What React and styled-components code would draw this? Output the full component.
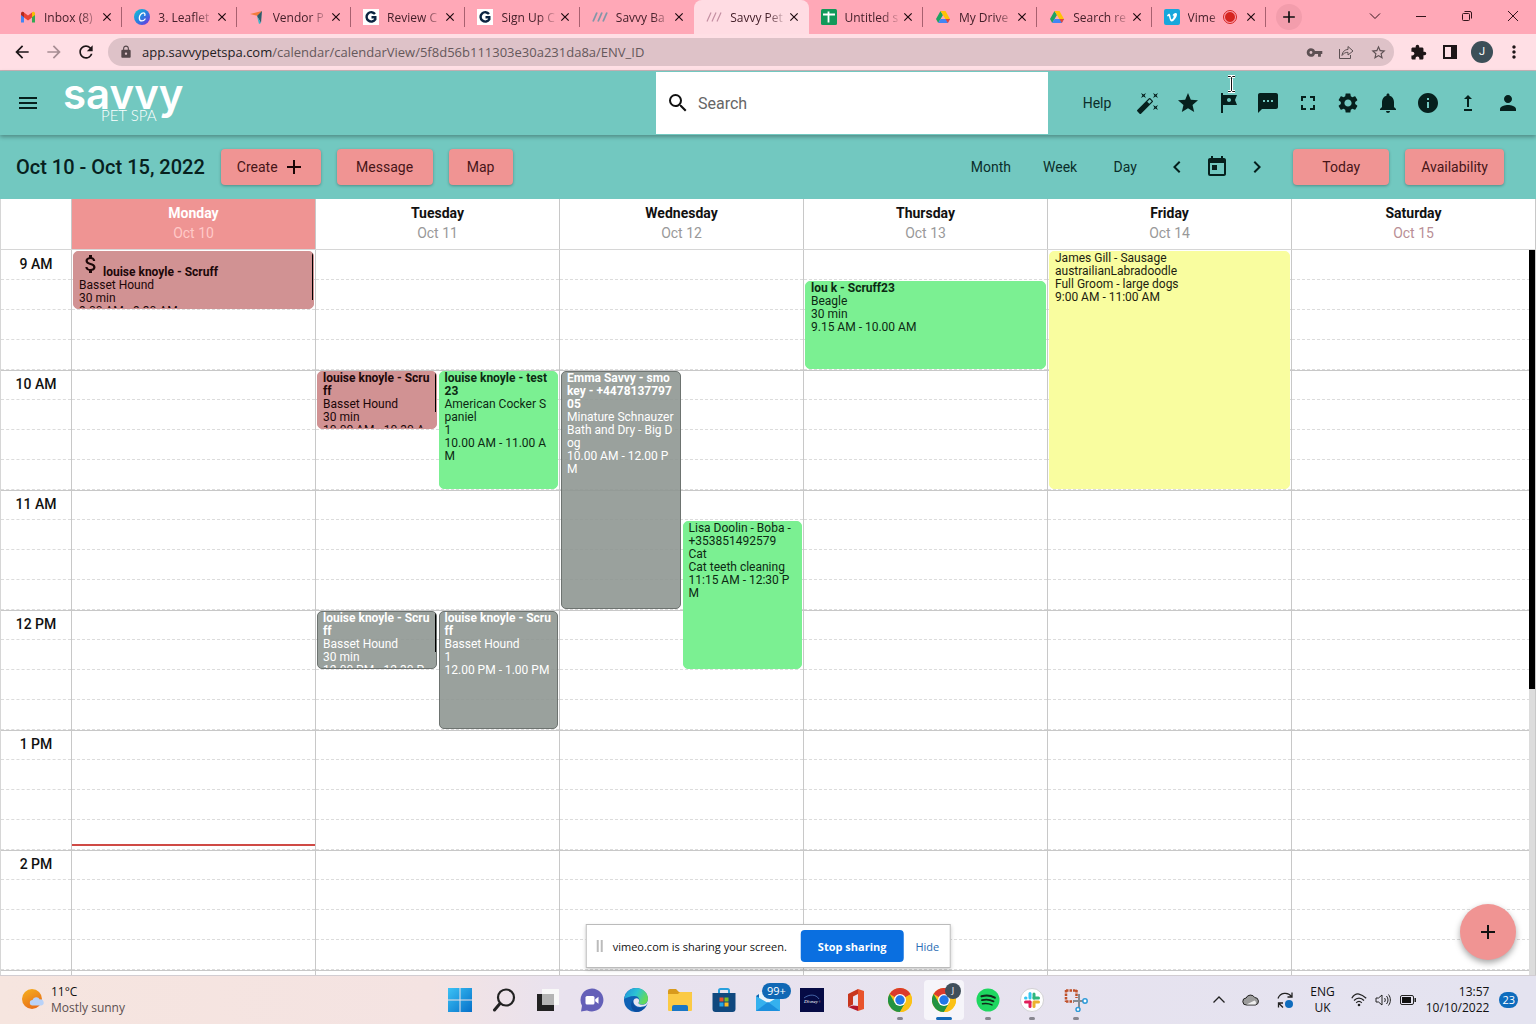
import React, { useState } from 'react';
import styled, { createGlobalStyle } from 'styled-components';
import {
  MdAdd,
  MdArrowBack,
  MdArrowForward,
  MdAttachMoney,
  MdAutoFixHigh,
  MdChevronLeft,
  MdChevronRight,
  MdClose,
  MdExtension,
  MdFullscreen,
  MdInfo,
  MdLock,
  MdMenu,
  MdMoreVert,
  MdNotifications,
  MdPerson,
  MdRefresh,
  MdSearch,
  MdSettings,
  MdSms,
  MdStar,
  MdStarBorder,
  MdToday,
  MdTour,
  MdUpgrade,
  MdVpnKey,
} from 'react-icons/md';

const tabs = [
  { icon: 'gmail', title: 'Inbox (8)' },
  { icon: 'canva', title: '3. Leaflet' },
  { icon: 'vendor', title: 'Vendor P' },
  { icon: 'g', title: 'Review C' },
  { icon: 'g', title: 'Sign Up C' },
  { icon: 'savvy', title: 'Savvy Ba' },
  { icon: 'savvyPink', title: 'Savvy Pet', active: true },
  { icon: 'sheets', title: 'Untitled s' },
  { icon: 'drive', title: 'My Drive' },
  { icon: 'drive', title: 'Search re' },
  { icon: 'vimeo', title: 'Vime', recording: true },
];

const hours = ['9 AM', '10 AM', '11 AM', '12 PM', '1 PM', '2 PM', '3 PM'];
const slots = Array.from({ length: hours.length * 4 }, (_, i) => i);

const days = [
  {
    name: 'Monday',
    date: 'Oct 10',
    today: true,
    events: [
      {
        start: 1,
        span: 2,
        tone: 'red',
        paid: true,
        scroll: 48,
        name: 'louise knoyle - Scruff',
        lines: ['Basset Hound', '30 min', '9.00 AM - 9.30 AM'],
      },
    ],
  },
  {
    name: 'Tuesday',
    date: 'Oct 11',
    events: [
      {
        start: 5,
        span: 2,
        col: '1',
        tone: 'red',
        scroll: 40,
        name: 'louise knoyle - Scruff',
        lines: ['Basset Hound', '30 min', '10.00 AM - 10.30 AM'],
      },
      {
        start: 5,
        span: 4,
        col: '2',
        tone: 'green',
        name: 'louise knoyle - test23',
        lines: ['American Cocker Spaniel', '1', '10.00 AM - 11.00 AM'],
      },
      {
        start: 13,
        span: 2,
        col: '1',
        tone: 'grey',
        scroll: 40,
        name: 'louise knoyle - Scruff',
        lines: ['Basset Hound', '30 min', '12.00 PM - 12.30 PM'],
      },
      {
        start: 13,
        span: 4,
        col: '2',
        tone: 'grey',
        name: 'louise knoyle - Scruff',
        lines: ['Basset Hound', '1', '12.00 PM - 1.00 PM'],
      },
    ],
  },
  {
    name: 'Wednesday',
    date: 'Oct 12',
    events: [
      {
        start: 5,
        span: 8,
        col: '1',
        tone: 'grey',
        name: 'Emma Savvy - smokey - +447813779705',
        lines: [
          'Minature Schnauzer',
          'Bath and Dry - Big Dog',
          '10.00 AM - 12.00 PM',
        ],
      },
      {
        start: 10,
        span: 5,
        col: '2',
        tone: 'green',
        plain: true,
        name: 'Lisa Doolin - Boba - +353851492579',
        lines: ['Cat', 'Cat teeth cleaning', '11:15 AM - 12:30 PM'],
      },
    ],
  },
  {
    name: 'Thursday',
    date: 'Oct 13',
    events: [
      {
        start: 2,
        span: 3,
        tone: 'green',
        name: 'lou k - Scruff23',
        lines: ['Beagle', '30 min', '9.15 AM - 10.00 AM'],
      },
    ],
  },
  {
    name: 'Friday',
    date: 'Oct 14',
    events: [
      {
        start: 1,
        span: 8,
        tone: 'yellow',
        plain: true,
        name: 'James Gill - Sausage',
        lines: [
          'austrailianLabradoodle',
          'Full Groom - large dogs',
          '9:00 AM - 11:00 AM',
        ],
      },
    ],
  },
  { name: 'Saturday', date: 'Oct 15', weekend: true, events: [] },
];

const tones = {
  red: { fill: '#d19293', line: '#d19293', text: '#1c0708' },
  green: { fill: '#7bf092', line: '#7bf092', text: '#0c2912' },
  grey: { fill: 'rgba(140, 148, 143, 0.88)', line: '#6d7370', text: '#fff' },
  yellow: { fill: '#f9fd9f', line: '#f9fd9f', text: '#1d1d10' },
};

const appIcons = [
  { label: 'What is new', Icon: MdAutoFixHigh },
  { label: 'Favourites', Icon: MdStar },
  { label: 'Tour', Icon: MdTour },
  { label: 'Messages', Icon: MdSms },
  { label: 'Full screen', Icon: MdFullscreen },
  { label: 'Settings', Icon: MdSettings },
  { label: 'Notifications', Icon: MdNotifications },
  { label: 'Info', Icon: MdInfo },
  { label: 'Upgrade', Icon: MdUpgrade },
  { label: 'Account', Icon: MdPerson },
];

const taskApps = [
  { label: 'Start', icon: 'windows' },
  { label: 'Search', icon: 'search' },
  { label: 'Task view', icon: 'taskview' },
  { label: 'Chat', icon: 'chat' },
  { label: 'Edge', icon: 'edge' },
  { label: 'Explorer', icon: 'folder' },
  { label: 'Store', icon: 'store' },
  { label: 'Mail', icon: 'mail', badge: '99+' },
  { label: 'Disney', icon: 'disney' },
  { label: 'Office', icon: 'office' },
  { label: 'Chrome', icon: 'chrome', open: true },
  { label: 'Chrome J', icon: 'chrome', open: true, active: true, person: 'J' },
  { label: 'Spotify', icon: 'spotify', open: true },
  { label: 'Slack', icon: 'slack', open: true },
  { label: 'Snipping tool', icon: 'snip', open: true },
];

function Favicon({ name }) {
  switch (name) {
    case 'gmail':
      return (
        <svg width="16" height="16" viewBox="0 0 16 16">
          <path d="M1 4v9.500h3V7z" fill="#4285f4" />
          <path d="M15 4v9.500h-3V7z" fill="#34a853" />
          <path d="M4 3.500v5l4 3 4-3v-5l-4 3z" fill="#ea4335" />
          <path d="M1 4.500C1 2.500 3 2.200 4 3.200v5L1 6z" fill="#b52a20" />
          <path d="M15 4.500c0-2-2-2.300-3-1.300v5L15 6z" fill="#fbbc04" />
        </svg>
      );
    case 'canva':
      return (
        <svg width="16" height="16" viewBox="0 0 16 16">
          <defs>
            <linearGradient id="canva" x1="0" y1="0" x2="1" y2="1">
              <stop offset="0" stopColor="#10c8d2" />
              <stop offset="0.5" stopColor="#2a7fe0" />
              <stop offset="1" stopColor="#7b2be0" />
            </linearGradient>
          </defs>
          <circle cx="8" cy="8" r="8" fill="url(#canva)" />
          <path
            d="M10.800 6.400c.6-1.500-.3-2.600-1.500-2.500-2.200.1-4 2.700-4 5 0 1.800 1 3 2.600 3 1.400 0 2.500-.8 3.200-1.900"
            fill="none"
            stroke="#fff"
            strokeWidth="1.300"
            strokeLinecap="round"
          />
        </svg>
      );
    case 'vendor':
      return (
        <svg width="16" height="16" viewBox="0 0 16 16">
          <path d="M1 5l12-3-4 5z" fill="#f47b3c" />
          <path d="M13 2l-1 12-4-7z" fill="#2b5d6b" />
          <path d="M8 7l4 7-2 1z" fill="#3bb5c9" />
        </svg>
      );
    case 'g':
      return (
        <svg width="16" height="16" viewBox="0 0 16 16">
          <rect width="16" height="16" fill="#fff" />
          <path
            d="M12 5A4.700 4.700 0 1 0 12.300 10.300V8.300H8.500"
            fill="none"
            stroke="#0b2340"
            strokeWidth="2.400"
          />
        </svg>
      );
    case 'savvy':
    case 'savvyPink':
      return (
        <svg width="16" height="16" viewBox="0 0 16 16">
          <g
            stroke={name === 'savvy' ? '#8296a8' : '#c48fa2'}
            strokeWidth={name === 'savvy' ? 1.8 : 1.2}
          >
            <path d="M1 12.500L5 3.500" />
            <path d="M6 12.500l4-9" />
            <path d="M11 12.500l4-9" />
          </g>
        </svg>
      );
    case 'sheets':
      return (
        <svg width="16" height="16" viewBox="0 0 16 16">
          <rect width="16" height="16" rx="1.500" fill="#12995a" />
          <path d="M2 5.500h12M7.500 2.500v11" stroke="#fff" strokeWidth="1.800" />
        </svg>
      );
    case 'drive':
      return (
        <svg width="16" height="16" viewBox="0 0 16 16">
          <path d="M5.500 2L1 10l2.200 4L8 6z" fill="#1ea362" />
          <path d="M5.500 2h5L15 10h-4.600z" fill="#ffc107" />
          <path d="M3.200 14L5.500 10H15l-2.200 4z" fill="#4285f4" />
          <path d="M10.500 10H15l-2.200 4z" fill="#ea4335" />
        </svg>
      );
    default:
      return (
        <svg width="16" height="16" viewBox="0 0 16 16">
          <rect width="16" height="16" rx="2" fill="#17a7dc" />
          <path
            d="M3 6.200c1.500-1.300 2.600-2.400 3.200-.2.500 2 .8 4.500 1.500 4.500.8 0 2-2.200 2-3.200 0-.8-.6-.8-1.200-.6C9.300 3.600 13.300 3 13 5.800c-.2 2-2.900 6.700-5.300 6.700C5.500 12.500 5.500 7 4.300 7l-.7.400z"
            fill="#fff"
          />
        </svg>
      );
  }
}

function TaskIcon({ name }) {
  switch (name) {
    case 'windows':
      return (
        <svg width="24" height="24" viewBox="0 0 24 24">
          <defs>
            <linearGradient id="win" x1="0" y1="0" x2="1" y2="1">
              <stop offset="0" stopColor="#3cc2f5" />
              <stop offset="1" stopColor="#0570c9" />
            </linearGradient>
          </defs>
          <path
            d="M0 0h11.500v11.500H0zM12.500 0H24v11.500H12.500zM0 12.500h11.500V24H0zM12.500 12.500H24V24H12.500z"
            fill="url(#win)"
          />
        </svg>
      );
    case 'search':
      return (
        <svg width="24" height="24" viewBox="0 0 24 24">
          <circle cx="14" cy="9.500" r="8" fill="none" stroke="#222" strokeWidth="2.200" />
          <path d="M8 15.500L2.500 22" stroke="#222" strokeWidth="3" strokeLinecap="round" />
        </svg>
      );
    case 'taskview':
      return (
        <svg width="24" height="24" viewBox="0 0 24 24">
          <rect x="6" y="1" width="17" height="16" fill="#f8f8f8" />
          <rect x="1" y="6" width="17" height="17" fill="#222" />
          <rect x="6" y="6" width="12" height="11" fill="#b4b4b4" />
        </svg>
      );
    case 'chat':
      return (
        <svg width="24" height="24" viewBox="0 0 24 24">
          <path
            d="M12 .5A11.500 11.500 0 1 1 7 22.400L1 23.500l1-5.800A11.500 11.500 0 0 1 12 .5z"
            fill="#6460b8"
          />
          <rect x="5.500" y="8" width="9" height="8.500" rx="1.500" fill="#fff" />
          <path d="M15.200 11.300l3.300-2.500v7l-3.300-2.500z" fill="#fff" />
        </svg>
      );
    case 'edge':
      return (
        <svg width="24" height="24" viewBox="0 0 24 24">
          <defs>
            <linearGradient id="edgeTop" x1="0" y1="0" x2="1" y2="0.4">
              <stop offset="0" stopColor="#1f8edb" />
              <stop offset="0.55" stopColor="#2cc4d4" />
              <stop offset="1" stopColor="#62d95a" />
            </linearGradient>
          </defs>
          <circle cx="12" cy="12" r="12" fill="#0f62b5" />
          <path
            d="M.2 11C1 4.500 6 0 12 0c7 0 12 5 12 10.500 0 4-3 6-6 6-2.600 0-4-1-3.200-2.300 1.800-2.500-.4-6.200-4.300-6.200C5.500 8 2 10 .2 11z"
            fill="url(#edgeTop)"
          />
          <path
            d="M9 12c-1 5 3.500 8.500 8 7.700 2-.3 3.500-.9 4.800-1.800C19.500 22 16 24 12 24 7 22.500 5.500 15.500 9 12z"
            fill="#0b4da0"
          />
          <path
            d="M9.500 12.500c-.7 5 5 8.500 12.500 5l2-2.500V11c0 4-3 5.800-6 5.800-2.600 0-4.200-1-3.300-2.500.7-1.100.5-2.400-.2-3.300-1.700-1.300-4.200-.5-5 1.500z"
            fill="#e6e4f2"
          />
        </svg>
      );
    case 'folder':
      return (
        <svg width="26" height="24" viewBox="0 0 26 24">
          <path d="M1 3a2 2 0 0 1 2-2h6l3 3h12a1 1 0 0 1 1 1v3H1z" fill="#d89a1c" />
          <path d="M1 6h10l2-2h11a1 1 0 0 1 1 1v17a1 1 0 0 1-1 1H2a1 1 0 0 1-1-1z" fill="#fbca45" />
          <path d="M5 23v-4a2 2 0 0 1 2-2h12a2 2 0 0 1 2 2v4z" fill="#1876c5" />
        </svg>
      );
    case 'store':
      return (
        <svg width="24" height="24" viewBox="0 0 24 24">
          <path d="M7 6V2.500A1.500 1.500 0 0 1 8.500 1h7A1.500 1.500 0 0 1 17 2.500V6" fill="none" stroke="#28a0dd" strokeWidth="2" />
          <path d="M.5 5h23v16a3 3 0 0 1-3 3h-17a3 3 0 0 1-3-3z" fill="#10487e" />
          <path d="M7.500 9.500h4v4h-4z" fill="#e8502c" />
          <path d="M12.500 9.500h4v4h-4z" fill="#7cbb22" />
          <path d="M7.500 14.500h4v4h-4z" fill="#25a5e8" />
          <path d="M12.500 14.500h4v4h-4z" fill="#fcba1d" />
        </svg>
      );
    case 'mail':
      return (
        <svg width="26" height="24" viewBox="0 0 26 24">
          <path d="M1 8L13 0l12 8v6H1z" fill="#1363ad" />
          <path d="M4 4h18v10H4z" fill="#e9f4fb" />
          <path d="M1 8l12 7 12-7v15H1z" fill="#35b1ee" />
          <path d="M1 23l12-9 12 9z" fill="#1b8fdd" />
        </svg>
      );
    case 'disney':
      return (
        <svg width="24" height="24" viewBox="0 0 24 24">
          <rect width="24" height="24" fill="#060b45" />
          <path d="M4 10c5-4 12-4 15 1" fill="none" stroke="#5d8ad0" strokeWidth="0.700" />
          <text x="4" y="15" fill="#fff" fontSize="5" fontFamily="Liberation Serif, serif" fontStyle="italic">
            Disney+
          </text>
        </svg>
      );
    case 'office':
      return (
        <svg width="24" height="24" viewBox="0 0 24 24">
          <path d="M4 6l10-5v5l-5 2.500v8L4 19z" fill="#c8361d" />
          <path d="M14 1l6 2v18l-6 2z" fill="#e8532b" />
          <path d="M4 19l5-1.500 5 .5v5z" fill="#b3152a" />
        </svg>
      );
    case 'chrome':
      return (
        <svg width="24" height="24" viewBox="0 0 24 24">
          <circle cx="12" cy="12" r="12" fill="#fbc116" />
          <path d="M12 12L1.600 6A12 12 0 0 1 22.400 6z" fill="#db3b2c" />
          <path d="M1.600 6A12 12 0 0 0 12 24l5.200-9L12 12 7 15z" fill="#229342" />
          <path d="M12 6h10.400L12 12z" fill="#db3b2c" />
          <path d="M12 24l5.200-9L22.400 6A12 12 0 0 1 12 24z" fill="#fbc116" />
          <circle cx="12" cy="12" r="6" fill="#fff" />
          <circle cx="12" cy="12" r="4.700" fill="#2377e8" />
        </svg>
      );
    case 'spotify':
      return (
        <svg width="24" height="24" viewBox="0 0 24 24">
          <circle cx="12" cy="12" r="11.500" fill="#1ed760" />
          <g fill="none" stroke="#10291a" strokeLinecap="round">
            <path d="M5.500 8.300c4.500-1.300 9.500-.8 13.300 1.300" strokeWidth="2.200" />
            <path d="M6 12.200c4-1.100 8-.6 11.500 1.200" strokeWidth="1.800" />
            <path d="M6.500 15.800c3.500-.8 6.500-.4 9.500 1.100" strokeWidth="1.500" />
          </g>
        </svg>
      );
    case 'slack':
      return (
        <svg width="24" height="24" viewBox="0 0 24 24">
          <circle cx="12" cy="12" r="11.500" fill="#fff" stroke="#bbb" strokeWidth="0.600" />
          <g strokeWidth="3" strokeLinecap="round">
            <path d="M10 5.500v4.500" stroke="#36c5f0" />
            <path d="M5.500 10H6" stroke="#36c5f0" />
            <path d="M14 6v4" stroke="#2eb67d" />
            <path d="M14 10h4.500" stroke="#2eb67d" />
            <path d="M5.500 14H10" stroke="#e01e5a" />
            <path d="M10 14v4.500" stroke="#e01e5a" />
            <path d="M14 14v4.500" stroke="#ecb22e" />
            <path d="M14.500 14h4" stroke="#ecb22e" />
          </g>
        </svg>
      );
    default:
      return (
        <svg width="24" height="24" viewBox="0 0 24 24">
          <path d="M2 2.500h11M2 2v12M2 13.500h8M12.500 2v8" stroke="#c0502a" strokeWidth="2.500" strokeDasharray="2.500 1" fill="none" />
          <path d="M15 6v15M9 13h11" stroke="#858b92" strokeWidth="2" />
          <circle cx="21" cy="13" r="2.200" fill="#fff" stroke="#2f9ad8" strokeWidth="1.500" />
          <circle cx="14" cy="21.500" r="2" fill="#fff" stroke="#2f9ad8" strokeWidth="1.500" />
        </svg>
      );
  }
}

function BrowserChrome() {
  return (
    <>
      <TabStrip>
        <TabList>
          {tabs.map((tab, index) => (
            <Tab
              key={index}
              $active={tab.active}
              $last={tabs[index + 1]?.active}
            >
              <Favicon name={tab.icon} />
              <TabTitle>{tab.title}</TabTitle>
              {tab.recording && <Recording />}
              <TabClose aria-label="Close tab">
                <MdClose />
              </TabClose>
            </Tab>
          ))}
        </TabList>
        <NewTab aria-label="New tab">
          <MdAdd />
        </NewTab>
        <WindowButtons>
          <WindowButton aria-label="Search tabs">
            <svg width="12" height="12" viewBox="0 0 12 12">
              <path d="M1 3.500l5 5 5-5" />
            </svg>
          </WindowButton>
          <WindowButton aria-label="Minimise">
            <svg width="12" height="12" viewBox="0 0 12 12">
              <path d="M1 6.500h10" />
            </svg>
          </WindowButton>
          <WindowButton aria-label="Restore">
            <svg width="12" height="12" viewBox="0 0 12 12">
              <rect x="1.500" y="3.500" width="7" height="7" rx="1" />
              <path d="M3.500 1.500h5.500a1.500 1.500 0 0 1 1.500 1.500v5.500" />
            </svg>
          </WindowButton>
          <WindowButton aria-label="Close">
            <svg width="12" height="12" viewBox="0 0 12 12">
              <path d="M1 1l10 10M11 1L1 11" />
            </svg>
          </WindowButton>
        </WindowButtons>
      </TabStrip>
      <Toolbar>
        <ToolButton aria-label="Back">
          <MdArrowBack />
        </ToolButton>
        <ToolButton aria-label="Forward" $faded>
          <MdArrowForward />
        </ToolButton>
        <ToolButton aria-label="Reload">
          <MdRefresh />
        </ToolButton>
        <AddressBar>
          <MdLock />
          <Url href="#address">
            app.savvypetspa.com
            <span>/calendar/calendarView/5f8d56b111303e30a231da8a/ENV_ID</span>
          </Url>
          <ToolButton aria-label="Passwords" $small>
            <MdVpnKey />
          </ToolButton>
          <ToolButton aria-label="Share" $small>
            <svg width="16" height="16" viewBox="0 0 16 16" fill="none" stroke="currentColor">
              <path d="M1.500 5v9.500h11V11" />
              <path d="M4 11.500c.5-4 3-6 6-6V2.500l5 4.500-5 4V8.300c-2.500 0-4.500 1-6 3.200z" />
            </svg>
          </ToolButton>
          <ToolButton aria-label="Bookmark" $small>
            <MdStarBorder />
          </ToolButton>
        </AddressBar>
        <ToolButton aria-label="Extensions" $small>
          <MdExtension />
        </ToolButton>
        <ToolButton aria-label="Side panel">
          <svg width="16" height="16" viewBox="0 0 16 16">
            <path d="M1 1h14v14H1zM3 3v10h6V3z" fillRule="evenodd" fill="currentColor" />
          </svg>
        </ToolButton>
        <ToolButton aria-label="Profile">
          <Avatar>J</Avatar>
        </ToolButton>
        <ToolButton aria-label="Menu">
          <MdMoreVert />
        </ToolButton>
      </Toolbar>
    </>
  );
}

function Event({ data }) {
  return (
    <EventBox
      $tone={tones[data.tone]}
      $start={data.start}
      $span={data.span}
      $col={data.col}
    >
      <EventText>
        <EventName $plain={data.plain} $paid={data.paid}>
          {data.paid && <MdAttachMoney />}
          {data.name}
        </EventName>
        {data.lines.map(line => (
          <div key={line}>{line}</div>
        ))}
      </EventText>
      {data.scroll && <EventThumb $size={data.scroll} />}
    </EventBox>
  );
}

function App() {
  const [search, setSearch] = useState('');

  return (
    <Screen>
      <GlobalStyle />
      <BrowserChrome />
      <AppBar>
        <IconButton aria-label="Menu">
          <MdMenu />
        </IconButton>
        <Logo href="#home">
          savvy
          <small>PET SPA</small>
        </Logo>
        <SearchBox>
          <MdSearch />
          <input
            type="text"
            aria-label="Search"
            placeholder="Search"
            value={search}
            onChange={e => setSearch(e.target.value)}
          />
        </SearchBox>
        <TextButton>Help</TextButton>
        {appIcons.map(({ label, Icon }) => (
          <IconButton key={label} aria-label={label}>
            <Icon />
            {label === 'Tour' && (
              <Cursor width="9" height="18" viewBox="0 0 9 18">
                <path d="M1 1.500h2.500l1 1 1-1H8M4.500 2.500v13M1 16.500h2.500l1-1 1 1H8" stroke="#fff" strokeWidth="3" />
                <path d="M1 1.500h2.500l1 1 1-1H8M4.500 2.500v13M1 16.500h2.500l1-1 1 1H8" stroke="#111" />
              </Cursor>
            )}
          </IconButton>
        ))}
      </AppBar>
      <CalendarBar>
        <Range>Oct 10 - Oct 15, 2022</Range>
        <ActionButton>
          Create <MdAdd />
        </ActionButton>
        <ActionButton $wide>Message</ActionButton>
        <ActionButton>Map</ActionButton>
        <ViewButtons>
          <TextButton>Month</TextButton>
          <TextButton>Week</TextButton>
          <TextButton>Day</TextButton>
          <IconButton aria-label="Previous">
            <MdChevronLeft />
          </IconButton>
          <IconButton aria-label="Pick a date">
            <MdToday />
          </IconButton>
          <IconButton aria-label="Next">
            <MdChevronRight />
          </IconButton>
        </ViewButtons>
        <ActionButton $wide>Today</ActionButton>
        <ActionButton>Availability</ActionButton>
      </CalendarBar>
      <WeekHead>
        <TimeHead />
        {days.map(day => (
          <DayHead key={day.name} $today={day.today} $weekend={day.weekend}>
            <strong>{day.name}</strong>
            <span>{day.date}</span>
          </DayHead>
        ))}
      </WeekHead>
      <Main>
        <WeekBody>
          <TimeColumn>
            {slots.map(slot => (
              <Slot key={slot} $index={slot}>
                {slot % 4 === 0 && hours[slot / 4]}
              </Slot>
            ))}
          </TimeColumn>
          {days.map(day => (
            <DayColumn key={day.name}>
              {slots.map(slot => (
                <Slot key={slot} $index={slot} />
              ))}
              {day.events.map((event, index) => (
                <Event key={index} data={event} />
              ))}
              {day.today && <NowLine />}
            </DayColumn>
          ))}
        </WeekBody>
        <ScrollTrack>
          <ScrollThumb />
        </ScrollTrack>
        <Fab aria-label="Add">
          <MdAdd />
        </Fab>
        <ShareBar>
          <Grip />
          <span>vimeo.com is sharing your screen.</span>
          <StopButton>Stop sharing</StopButton>
          <a href="#hide">Hide</a>
        </ShareBar>
      </Main>
      <Taskbar>
        <Weather>
          <svg width="24" height="24" viewBox="0 0 24 24">
            <defs>
              <linearGradient id="sun" x1="0" y1="0" x2="0.500" y2="1">
                <stop offset="0" stopColor="#f6b21d" />
                <stop offset="1" stopColor="#e8701a" />
              </linearGradient>
            </defs>
            <circle cx="11" cy="11" r="10" fill="url(#sun)" />
            <path
              d="M11.500 17.500a2.700 2.700 0 0 1 0-5.400 4 4 0 0 1 7.300-.7 3 3 0 0 1 1.500 6.100z"
              fill="#b9d2f8"
            />
          </svg>
          <div>
            11°C
            <span>Mostly sunny</span>
          </div>
        </Weather>
        <TaskApps>
          {taskApps.map(app => (
            <TaskButton key={app.label} aria-label={app.label} $active={app.active} $open={app.open}>
              <TaskIcon name={app.icon} />
              {app.badge && <MailBadge>{app.badge}</MailBadge>}
              {app.person && <PersonBadge>{app.person}</PersonBadge>}
            </TaskButton>
          ))}
        </TaskApps>
        <Tray>
          <svg width="14" height="14" viewBox="0 0 14 14" fill="none" stroke="#222" strokeWidth="1.300">
            <path d="M1.500 9.500L7 4l5.500 5.500" />
          </svg>
          <svg width="18" height="18" viewBox="0 0 18 18">
            <path
              d="M4.500 14a3.500 3.500 0 0 1-.4-7 4.800 4.800 0 0 1 8.600-.5A3.800 3.800 0 0 1 13.500 14z"
              fill="#9b9b9b"
              stroke="#222"
            />
            <path d="M4.500 13.500l8-4a3 3 0 0 1 1 4z" fill="#eee" />
          </svg>
          <svg width="18" height="18" viewBox="0 0 18 18" fill="none" stroke="#222" strokeWidth="1.300">
            <path d="M2 7.500C4 1.500 12 .5 15.500 5.500M16 1.500v4.500h-4.500" />
            <path d="M2.500 16.500V12H7M3 12.500l4 4" />
            <circle cx="13" cy="13" r="4" fill="#0f6cbd" stroke="none" />
          </svg>
          <Language>
            ENG
            <br />
            UK
          </Language>
          <TrayGroup>
            <svg width="16" height="16" viewBox="0 0 16 16" fill="none" stroke="#222" strokeWidth="1.200">
              <path d="M.8 6.300C5-1 11 2.300 15.200 6.300M3 8.500c3-3.300 7-3.300 10 0M5.200 10.800c1.700-1.800 3.900-1.800 5.600 0" />
              <circle cx="8" cy="13" r="1.300" fill="#222" stroke="none" />
            </svg>
            <svg width="16" height="16" viewBox="0 0 16 16" fill="none" stroke="#222">
              <path d="M1 6v4h2.500L7 13V3L3.500 6zM9.500 6c1 1.200 1 2.800 0 4M11.500 4c2 2.300 2 5.700 0 8M13.500 2.500c2.500 3.300 2.500 7.700 0 11" />
            </svg>
            <svg width="18" height="16" viewBox="0 0 18 16">
              <rect x="1.500" y="3.500" width="13" height="9" rx="1.500" fill="none" stroke="#222" />
              <rect x="3" y="5" width="9" height="6" fill="#111" />
              <path d="M15.500 6h1.500v4h-1.500z" fill="#222" />
            </svg>
          </TrayGroup>
          <Clock>
            13:57
            <br />
            10/10/2022
          </Clock>
          <Count>23</Count>
        </Tray>
      </Taskbar>
    </Screen>
  );
}

const GlobalStyle = createGlobalStyle`
  * {
    box-sizing: border-box;
  }
  body {
    margin: 0;
    font-family: Roboto, sans-serif;
    font-size: 14px;
    color: #111;
  }
  button {
    margin: 0;
    padding: 0;
    border: none;
    background: none;
    color: inherit;
    font: inherit;
    cursor: pointer;
  }
  a {
    color: inherit;
    text-decoration: none;
  }
  svg {
    flex: none;
  }
`;

const Screen = styled.div`
  display: flex;
  flex-direction: column;
  height: 100vh;
  overflow: hidden;
  background: #fff;
`;

//------------------- browser -------------------//

const TabStrip = styled.div`
  display: flex;
  align-items: center;
  height: 34px;
  padding-left: 8px;
  background: #ffa8b7;
  font-family: 'Open Sans', sans-serif;
  font-size: 12px;
`;

const TabList = styled.div`
  display: flex;
  flex: 0 1 1258px;
  min-width: 0;
`;

const Tab = styled.div`
  display: flex;
  align-items: center;
  flex: 1;
  min-width: 0;
  height: 34px;
  padding: 0 8px 0 12px;
  border-radius: 8px 8px 0 0;
  color: #45202a;
  background: ${props => (props.$active ? '#ffdce3' : 'none')};
  &::after {
    content: '';
    order: 9;
    width: 1px;
    height: 20px;
    margin-right: -8px;
    margin-left: 7px;
    background: ${props =>
      props.$active || props.$last ? 'transparent' : '#a8606f'};
  }
`;

const TabTitle = styled.span`
  flex: 1;
  min-width: 0;
  margin-left: 8px;
  white-space: nowrap;
  mask-image: linear-gradient(to right, #000 65%, transparent);
`;

const Recording = styled.span`
  width: 12px;
  height: 12px;
  margin: 0 8px 0 2px;
  border: 1px solid #ffa8b7;
  border-radius: 50%;
  background: #d5241f;
  outline: 1px solid #d5241f;
`;

const TabClose = styled.button`
  display: flex;
  color: #1c0a0f;
  svg {
    width: 14px;
    height: 14px;
    stroke: currentColor;
  }
`;

const NewTab = styled.button`
  display: flex;
  justify-content: center;
  align-items: center;
  width: 26px;
  height: 26px;
  margin-left: 10px;
  border-radius: 50%;
  background: #f39dac;
  svg {
    width: 20px;
    height: 20px;
  }
`;

const WindowButtons = styled.div`
  display: flex;
  margin-left: auto;
`;

const WindowButton = styled.button`
  width: 46px;
  height: 30px;
  svg {
    fill: none;
    stroke: #33141b;
  }
`;

const Toolbar = styled.div`
  display: flex;
  align-items: center;
  height: 37px;
  padding: 0 6px;
  border-bottom: 1px solid #c9b4b8;
  background: #ffdfe5;
`;

const ToolButton = styled.button`
  display: flex;
  justify-content: center;
  align-items: center;
  width: 32px;
  height: 28px;
  color: ${props => (props.$faded ? '#a78d93' : '#1d1517')};
  svg {
    font-size: ${props => (props.$small ? '17px' : '20px')};
  }
`;

const AddressBar = styled.div`
  display: flex;
  flex: 1;
  align-items: center;
  height: 28px;
  margin: 0 8px 0 6px;
  padding-left: 11px;
  border-radius: 14px;
  background: #dec2c8;
  color: #55474a;
  font-family: 'Open Sans', sans-serif;
  font-size: 13px;
  > svg {
    width: 14px;
    height: 14px;
  }
  ${ToolButton} {
    color: #5d5053;
  }
`;

const Url = styled.a`
  flex: 1;
  margin-left: 9px;
  color: #241d1f;
  white-space: nowrap;
  span {
    color: #65585b;
  }
`;

const Avatar = styled.span`
  width: 22px;
  height: 22px;
  border-radius: 50%;
  background: #3c4f58;
  color: #fff;
  font-size: 11px;
  line-height: 22px;
`;

//------------------- app bars -------------------//

const AppBar = styled.header`
  position: relative;
  display: flex;
  align-items: center;
  height: 64px;
  padding: 0 8px;
  background: #72c8c0;
  box-shadow: 0 2px 4px rgba(0, 0, 0, 0.3);
`;

const IconButton = styled.button`
  position: relative;
  display: flex;
  justify-content: center;
  align-items: center;
  width: 40px;
  height: 40px;
  color: #06201d;
  svg {
    font-size: 24px;
  }
`;

const Cursor = styled.svg`
  position: absolute;
  top: -8px;
  left: 19px;
  fill: none;
`;

const Logo = styled.a`
  margin-left: 15px;
  color: #fff;
  font-family: Inter, sans-serif;
  font-size: 42px;
  font-weight: 600;
  line-height: 24px;
  small {
    display: block;
    margin-left: 38px;
    font-family: Lato, sans-serif;
    font-size: 15px;
    font-weight: 300;
    line-height: 18px;
  }
`;

const SearchBox = styled.label`
  display: flex;
  align-items: center;
  flex: 0 1 392px;
  height: 62px;
  margin-right: 18px;
  margin-left: auto;
  padding: 0 10px;
  background: #fff;
  svg {
    width: 24px;
    height: 24px;
  }
  input {
    flex: 1;
    min-width: 0;
    margin-left: 8px;
    padding: 0;
    border: none;
    outline: none;
    font: 16px Roboto, sans-serif;
  }
  input::placeholder {
    color: #666;
  }
`;

const TextButton = styled.button`
  min-width: 62px;
  height: 36px;
  padding: 0 16px;
  color: #0b2e2a;
`;

const CalendarBar = styled.div`
  display: flex;
  align-items: center;
  gap: 16px;
  height: 64px;
  padding: 0 32px 0 16px;
  background: #72c8c0;
`;

const Range = styled.h1`
  margin: 0;
  color: #07211e;
  font-size: 20px;
  font-weight: 500;
  white-space: nowrap;
`;

const ActionButton = styled.button`
  display: flex;
  justify-content: center;
  align-items: center;
  min-width: ${props => (props.$wide ? '96px' : '64px')};
  height: 36px;
  padding: 0 16px;
  border-radius: 4px;
  background: #f09493;
  box-shadow: 0 1px 3px rgba(0, 0, 0, 0.3);
  color: #471518;
  svg {
    width: 24px;
    height: 24px;
    margin-left: 4px;
    margin-right: -1px;
    color: #1a0506;
  }
`;

const ViewButtons = styled.div`
  display: flex;
  align-items: center;
  margin-left: auto;
  ${TextButton} {
    min-width: 64px;
  }
`;

//------------------- calendar -------------------//

const WeekHead = styled.div`
  display: grid;
  grid-template-columns: 72px repeat(6, 1fr);
  height: 51px;
  border-bottom: 1px solid #d6d6d6;
`;

const TimeHead = styled.div`
  border-right: 1px solid #c8c8c8;
  border-left: 1px solid #d6d6d6;
`;

const DayHead = styled.div`
  display: flex;
  flex-direction: column;
  align-items: center;
  padding-top: 4px;
  border-right: 1px solid #c8c8c8;
  background: ${props => (props.$today ? '#ef9493' : '#fff')};
  line-height: 20px;
  strong {
    color: ${props => (props.$today ? '#fff' : '#111')};
  }
  span {
    color: ${props =>
      props.$today ? '#ffc9c8' : props.$weekend ? '#b98f96' : '#999'};
  }
`;

const Main = styled.main`
  position: relative;
  flex: 1;
  min-height: 0;
  overflow: hidden;
`;

const WeekBody = styled.div`
  display: grid;
  grid-template-columns: 72px repeat(6, 1fr);
`;

const DayColumn = styled.div`
  display: grid;
  grid-template-columns: 1fr 1fr;
  grid-template-rows: repeat(28, 30px);
  min-width: 0;
  border-right: 1px solid #c8c8c8;
`;

const TimeColumn = styled(DayColumn)`
  border-left: 1px solid #d6d6d6;
  font-weight: 500;
  text-align: center;
`;

const Slot = styled.div`
  grid-row: ${props => props.$index + 1};
  grid-column: 1 / -1;
  border-top: ${props =>
    props.$index % 4 === 0 && props.$index > 0 ? '1px solid #c8c8c8' : 'none'};
  border-bottom: 1px dashed #dcdcdc;
  line-height: ${props => (props.$index > 0 ? '26px' : '28px')};
`;

const EventBox = styled.article`
  z-index: 1;
  display: flex;
  grid-row: ${props => props.$start} / span ${props => props.$span};
  grid-column: ${props => props.$col || '1 / -1'};
  min-width: 0;
  margin: 1px;
  border: 1px solid ${props => props.$tone.line};
  border-radius: 5px;
  background: ${props => props.$tone.fill};
  color: ${props => props.$tone.text};
  font-size: 12px;
  line-height: 13px;
  overflow: hidden;
`;

const EventText = styled.div`
  flex: 1;
  min-width: 0;
  padding: 0 5px;
  word-break: break-all;
`;

const EventName = styled.div`
  display: ${props => (props.$paid ? 'flex' : 'block')};
  align-items: flex-end;
  font-weight: ${props => (props.$plain ? 400 : 700)};
  svg {
    width: 24px;
    height: 24px;
    margin-bottom: 3px;
  }
`;

// overlaps the text padding, so it takes no width from the lines
const EventThumb = styled.div`
  width: 1px;
  height: ${props => props.$size}px;
  margin-left: -1px;
  background: #000;
`;

const NowLine = styled.div`
  z-index: 1;
  grid-row: 20;
  grid-column: 1 / -1;
  align-self: end;
  height: 2px;
  margin-bottom: 4px;
  background: #cf4a45;
`;

const ScrollTrack = styled.div`
  position: absolute;
  top: 0;
  right: 1px;
  bottom: 0;
  width: 6px;
  background: #dcdcdc;
`;

const ScrollThumb = styled.div`
  height: 60.5%;
  background: #000;
`;

const Fab = styled.button`
  position: absolute;
  right: 20px;
  bottom: 15px;
  display: flex;
  justify-content: center;
  align-items: center;
  width: 56px;
  height: 56px;
  border-radius: 50%;
  background: #f09493;
  box-shadow: 0 3px 6px rgba(0, 0, 0, 0.35);
  svg {
    width: 24px;
    height: 24px;
  }
`;

const ShareBar = styled.div`
  position: absolute;
  bottom: 7px;
  left: 50%;
  display: flex;
  align-items: center;
  height: 44px;
  padding: 0 10px;
  border: 1px solid #bbb;
  background: #fff;
  box-shadow: 0 2px 4px rgba(0, 0, 0, 0.2);
  font-family: 'Open Sans', sans-serif;
  font-size: 11px;
  white-space: nowrap;
  transform: translateX(-50%);
  a {
    margin-left: 12px;
    color: #2a6cb5;
  }
`;

const Grip = styled.i`
  width: 6px;
  height: 12px;
  margin-right: 10px;
  border: solid #bbb;
  border-width: 0 2px;
`;

const StopButton = styled.button`
  height: 32px;
  margin-left: 14px;
  padding: 0 17px;
  border-radius: 4px;
  background: #0a6fe0;
  color: #fff;
  font-weight: 700;
`;

//------------------- taskbar -------------------//

const Taskbar = styled.footer`
  display: grid;
  grid-template-columns: 1fr auto 1fr;
  align-items: center;
  height: 49px;
  border-top: 1px solid #d2cdd2;
  background: linear-gradient(90deg, #f6e5df, #f4e3e2 28%, #e9e2ee 36%, #e4e3f0);
  font-family: 'Open Sans', sans-serif;
  font-size: 12px;
  line-height: 16px;
`;

const Weather = styled.div`
  display: flex;
  align-items: center;
  gap: 6px;
  padding-left: 21px;
  span {
    display: block;
    color: #5c5050;
  }
`;

const TaskApps = styled.div`
  display: flex;
  gap: 4px;
`;

const TaskButton = styled.button`
  position: relative;
  display: flex;
  justify-content: center;
  align-items: center;
  width: 40px;
  height: 40px;
  border-radius: 4px;
  background: ${props => (props.$active ? '#f6f5fa' : 'none')};
  &::after {
    content: '';
    position: absolute;
    bottom: 0;
    width: ${props => (props.$active ? '16px' : '6px')};
    height: 3px;
    border-radius: 2px;
    background: ${props =>
      props.$active ? '#1268b8' : props.$open ? '#87868f' : 'none'};
  }
`;

const MailBadge = styled.span`
  position: absolute;
  top: 3px;
  left: 14px;
  padding: 0 5px;
  border-radius: 8px;
  background: #1068b5;
  color: #fff;
  font-size: 11px;
`;

const PersonBadge = styled.span`
  position: absolute;
  top: 3px;
  right: 3px;
  width: 16px;
  border-radius: 50%;
  background: #3f4f5a;
  color: #fff;
  font-size: 9px;
`;

const Tray = styled.div`
  display: flex;
  justify-content: flex-end;
  align-items: center;
  gap: 16px;
  padding-right: 18px;
`;

const Language = styled.span`
  text-align: center;
`;

const TrayGroup = styled.span`
  display: flex;
  gap: 8px;
`;

const Clock = styled.time`
  margin-left: -7px;
  text-align: right;
`;

const Count = styled.span`
  margin-left: -6px;
  padding: 0 3px;
  border-radius: 8px;
  background: #0e6cbd;
  color: #fff;
  font-size: 11px;
`;

export default App;
